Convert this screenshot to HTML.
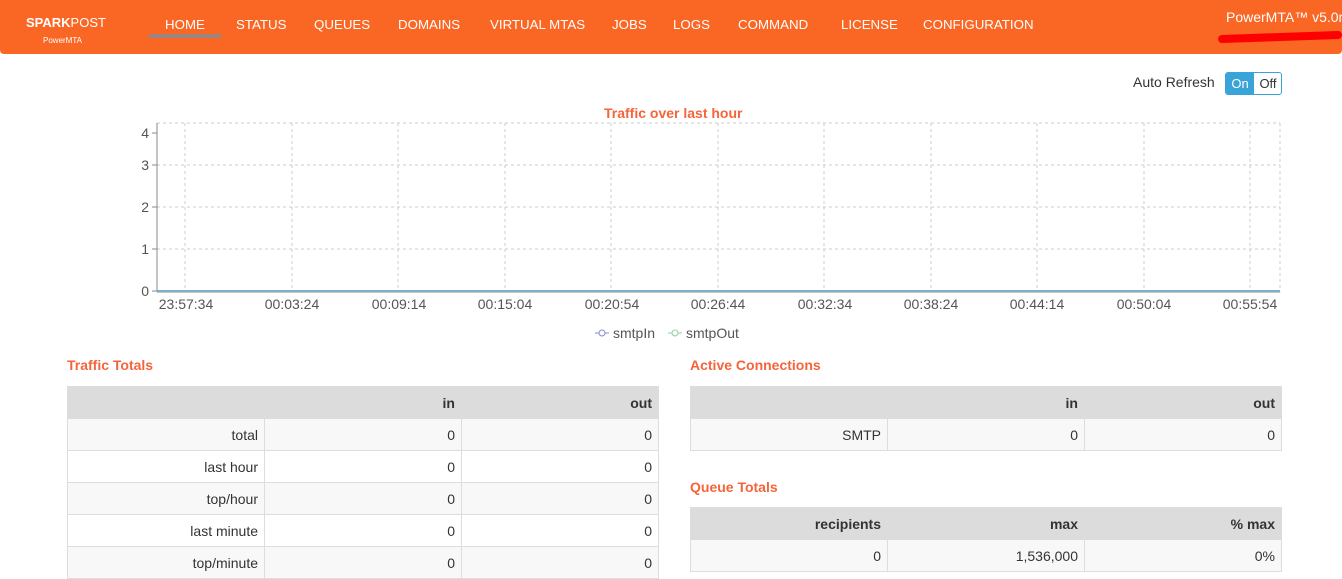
<!DOCTYPE html>
<html><head><meta charset="utf-8"><style>
*{box-sizing:border-box;margin:0;padding:0}
body{width:1342px;height:573px;overflow:hidden;background:#fff;font-family:"Liberation Sans",sans-serif;color:#333;font-size:14px;position:relative}
.hdr{position:absolute;left:0;top:0;width:1342px;height:54px;background:#fa6624;border-radius:0 0 4px 4px}
.nav{position:absolute;top:17px;color:#fff;font-size:13.3px}
.t{position:absolute}
table{position:absolute;border-collapse:collapse;font-size:14px}
td{border:1px solid #ddd;height:32px;text-align:right;padding:0 6px;width:197px}
tr.h td{background:#dcdcdc;font-weight:bold;height:32px}
tr.s td{background:#f8f8f8}
.ttl{position:absolute;color:#f5643a;font-weight:bold;font-size:14px}
</style></head><body>
<div class="hdr">
<div class="t" style="left:26px;top:15px;color:#fff;font-weight:bold;font-size:13px">SPARK<span style="font-weight:normal">POST</span></div>
<div class="t" style="left:43px;top:36px;color:#fff;font-size:8px">PowerMTA</div>
<div class="nav" style="left:165px">HOME</div>
<div class="t" style="left:149px;top:35px;width:72px;height:2px;background:#3aa3d8"></div>
<div class="nav" style="left:236px">STATUS</div>
<div class="nav" style="left:314px">QUEUES</div>
<div class="nav" style="left:398px">DOMAINS</div>
<div class="nav" style="left:490px">VIRTUAL MTAS</div>
<div class="nav" style="left:612px">JOBS</div>
<div class="nav" style="left:673px">LOGS</div>
<div class="nav" style="left:738px">COMMAND</div>
<div class="nav" style="left:841px">LICENSE</div>
<div class="nav" style="left:923px">CONFIGURATION</div>
<div class="t" style="left:1226px;top:9px;color:#fff;font-size:14px;white-space:nowrap">PowerMTA™ v5.0r3</div>
<div class="t" style="left:1218px;top:33px;width:124px;height:8px;background:#f00;border-radius:4px;transform:rotate(-2deg)"></div>
</div>
<div class="t" style="left:1133px;top:74px">Auto Refresh</div>
<div class="t" style="left:1225px;top:72px;width:57px;height:23px;border:1px solid #3aa3d8;border-radius:3px;overflow:hidden;font-size:13px">
<div style="position:absolute;left:0;top:0;width:28px;height:21px;background:#3aa3d8;color:#fff;text-align:center;line-height:21px">On</div>
<div style="position:absolute;left:28px;top:0;width:28px;height:21px;text-align:center;line-height:21px">Off</div></div>
<div class="t" style="left:604px;top:105px;color:#f5643a;font-weight:bold;font-size:14px">Traffic over last hour</div>
<svg class="t" style="left:0;top:0" width="1342" height="350">
<g stroke="#ccc" stroke-dasharray="3,3">
<line x1="157" y1="123" x2="1280" y2="123"/><line x1="157" y1="165" x2="1280" y2="165"/><line x1="157" y1="207" x2="1280" y2="207"/><line x1="157" y1="249" x2="1280" y2="249"/>
<line x1="185" y1="123" x2="185" y2="292"/><line x1="292" y1="123" x2="292" y2="292"/><line x1="398" y1="123" x2="398" y2="292"/><line x1="505" y1="123" x2="505" y2="292"/><line x1="611" y1="123" x2="611" y2="292"/><line x1="718" y1="123" x2="718" y2="292"/><line x1="824" y1="123" x2="824" y2="292"/><line x1="931" y1="123" x2="931" y2="292"/><line x1="1037" y1="123" x2="1037" y2="292"/><line x1="1144" y1="123" x2="1144" y2="292"/><line x1="1250" y1="123" x2="1250" y2="292"/><line x1="1280" y1="123" x2="1280" y2="292"/>
</g>
<g stroke="#888"><line x1="157" y1="123" x2="157" y2="292"/><line x1="157" y1="292" x2="1280" y2="292"/>
<line x1="152" y1="133" x2="157" y2="133"/><line x1="152" y1="165" x2="157" y2="165"/><line x1="152" y1="207" x2="157" y2="207"/><line x1="152" y1="249" x2="157" y2="249"/><line x1="152" y1="291" x2="157" y2="291"/></g>
<line x1="157" y1="291" x2="1280" y2="291" stroke="#7fb0c8" stroke-width="2"/>
<g font-family="Liberation Sans" font-size="14" fill="#555" text-anchor="end">
<text x="149" y="138">4</text><text x="149" y="170">3</text><text x="149" y="212">2</text><text x="149" y="254">1</text><text x="149" y="296">0</text></g>
<g font-family="Liberation Sans" font-size="14" fill="#555" text-anchor="middle">
<text x="186" y="309">23:57:34</text><text x="292" y="309">00:03:24</text><text x="399" y="309">00:09:14</text><text x="505" y="309">00:15:04</text><text x="612" y="309">00:20:54</text><text x="718" y="309">00:26:44</text><text x="825" y="309">00:32:34</text><text x="931" y="309">00:38:24</text><text x="1037" y="309">00:44:14</text><text x="1144" y="309">00:50:04</text><text x="1250" y="309">00:55:54</text></g>
<line x1="595" y1="333" x2="609" y2="333" stroke="#8a8ad0"/><circle cx="602" cy="333" r="3" fill="#fff" stroke="#8a8ad0"/>
<text x="613" y="338" font-family="Liberation Sans" font-size="14" fill="#555">smtpIn</text>
<line x1="668" y1="333" x2="682" y2="333" stroke="#8fcf9f"/><circle cx="675" cy="333" r="3" fill="#fff" stroke="#8fcf9f"/>
<text x="686" y="338" font-family="Liberation Sans" font-size="14" fill="#555">smtpOut</text>
</svg>
<div class="ttl" style="left:67px;top:357px">Traffic Totals</div>
<table style="left:67px;top:386px;width:592px">
<tr class="h"><td></td><td>in</td><td>out</td></tr>
<tr class="s"><td>total</td><td>0</td><td>0</td></tr>
<tr><td>last hour</td><td>0</td><td>0</td></tr>
<tr class="s"><td>top/hour</td><td>0</td><td>0</td></tr>
<tr><td>last minute</td><td>0</td><td>0</td></tr>
<tr class="s"><td>top/minute</td><td>0</td><td>0</td></tr>
</table>
<div class="ttl" style="left:690px;top:357px">Active Connections</div>
<table style="left:690px;top:386px;width:592px">
<tr class="h"><td></td><td>in</td><td>out</td></tr>
<tr class="s"><td>SMTP</td><td>0</td><td>0</td></tr>
</table>
<div class="ttl" style="left:690px;top:479px">Queue Totals</div>
<table style="left:690px;top:507px;width:592px">
<tr class="h"><td>recipients</td><td>max</td><td>% max</td></tr>
<tr class="s"><td>0</td><td>1,536,000</td><td>0%</td></tr>
</table>
</body></html>
